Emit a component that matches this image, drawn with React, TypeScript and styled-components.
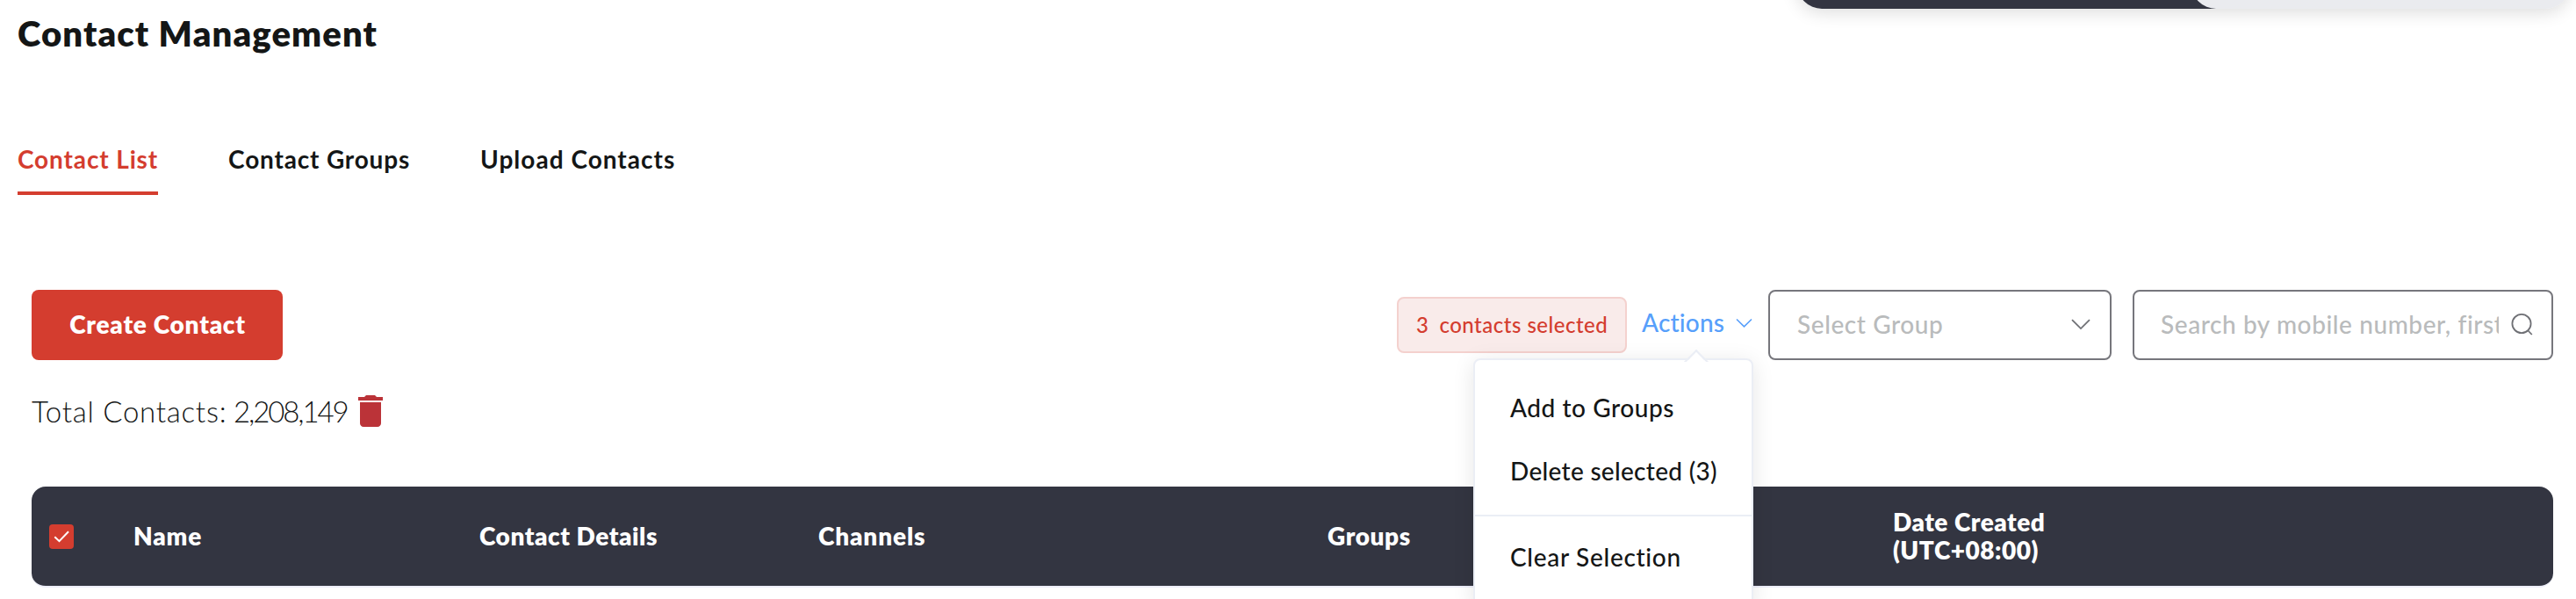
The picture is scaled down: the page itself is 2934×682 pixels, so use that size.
import React from "react";
import styled, { createGlobalStyle } from "styled-components";

const GlobalStyle = createGlobalStyle`
  * { box-sizing: border-box; }
  html, body { margin: 0; background: #fff; overflow: hidden; }
  body { font-family: Lato, "Open Sans", sans-serif; color: #141616; }
  button, input { font: inherit; }
`;

const Page = styled.div`
  position: relative;
  height: 682px;
  overflow: hidden;
  padding: 14px 26px 0 20px;
`;

const FloatingBar = styled.div`
  position: absolute;
  top: -50px;
  left: 2047px;
  width: 880px;
  height: 60px;
  display: flex;
  border-radius: 28px;
  background: linear-gradient(90deg, #333541 60%, #eaebef 60%);
  box-shadow: 0 4px 20px rgba(0, 0, 0, 0.14);
  overflow: hidden;
`;

const FloatingSegment = styled.div`
  margin-left: auto;
  width: 431px;
  border-radius: 28px 0 0 28px;
  background: #eaebef;
`;

const Title = styled.h1`
  margin: 0;
  font-size: 40px;
  font-weight: 800;
  line-height: 48px;
  letter-spacing: 1.12px;
`;

const Tabs = styled.nav`
  display: flex;
  gap: 80px;
  margin-top: 102px;
`;

const Tab = styled.a<{ $active?: boolean; $track: number }>`
  padding-bottom: 20px;
  border-bottom: 4px solid ${(p) => (p.$active ? "#d43d2f" : "transparent")};
  color: ${(p) => (p.$active ? "#d43d2f" : "#141616")};
  font-size: 28px;
  font-weight: 700;
  line-height: 34px;
  letter-spacing: ${(p) => p.$track}px;
`;

const Content = styled.main`
  margin-top: 108px;
  padding-left: 16px;
`;

const Toolbar = styled.div`
  display: flex;
  align-items: center;
  height: 80px;
`;

const CreateButton = styled.button`
  width: 286px;
  height: 80px;
  margin-right: auto;
  padding: 0 0 2px 1px;
  border: 0;
  border-radius: 8px;
  background: #d43d2f;
  color: #fff;
  font-size: 28px;
  font-weight: 800;
  letter-spacing: 0.75px;
`;

const SelectionChip = styled.div`
  display: flex;
  align-items: center;
  gap: 12px;
  width: 262px;
  height: 64px;
  margin-right: 17px;
  padding: 0 0 2px 20px;
  border: 2px solid #f4d1ce;
  border-radius: 8px;
  background: #f9ebea;
  color: #d43d2f;
  font-size: 24px;
  font-weight: 500;
  letter-spacing: 0.5px;
  white-space: nowrap;
`;

const ActionsMenu = styled.div`
  position: relative;
  width: 127px;
  height: 40px;
  margin-right: 17px;
`;

const ActionsTrigger = styled.div`
  display: flex;
  align-items: center;
  justify-content: space-between;
  height: 34px;
  padding-right: 1px;
  color: #579ffb;
  font-size: 28px;
  font-weight: 500;
  letter-spacing: 0.2px;
`;

const Dropdown = styled.div`
  position: absolute;
  top: 58px;
  right: 0;
  z-index: 2;
  width: 319px;
  padding: 18px 0 20px;
  border: 2px solid #ebeef5;
  border-radius: 8px;
  background: #fff;
  box-shadow: 0 4px 24px rgba(0, 0, 0, 0.1);
`;

const DropdownArrow = styled.div`
  position: absolute;
  top: -8px;
  right: 53px;
  width: 20px;
  height: 20px;
  border: 2px solid #ebeef5;
  border-right-color: transparent;
  border-bottom-color: transparent;
  background: linear-gradient(135deg, #fff 50%, transparent 50%);
  transform: rotate(45deg);
`;

const DropdownItem = styled.div<{ $track: number }>`
  padding-left: 40px;
  font-size: 28px;
  font-weight: 500;
  line-height: 72px;
  letter-spacing: ${(p) => p.$track}px;
`;

const Divider = styled.div`
  height: 2px;
  margin: 14px 0 10px;
  background: #ebeef5;
`;

const Field = styled.div<{ $width: number; $padding: string }>`
  display: flex;
  align-items: center;
  justify-content: space-between;
  width: ${(p) => p.$width}px;
  height: 80px;
  padding: ${(p) => p.$padding};
  border: 2px solid #76767c;
  border-radius: 8px;
  background: #fff;
  & + & { margin-left: 24px; }
`;

const Placeholder = styled.span<{ $width?: number }>`
  ${(p) => (p.$width ? `width: ${p.$width}px;` : "")}
  overflow: hidden;
  padding-bottom: 2px;
  white-space: nowrap;
  color: #b9bbbc;
  font-size: 28px;
  font-weight: 500;
  line-height: 36px;
  letter-spacing: 0.58px;
`;

const Summary = styled.div`
  display: flex;
  align-items: center;
  height: 48px;
  margin-top: 34px;
  font-size: 33px;
  font-weight: 300;
`;

const SummaryLabel = styled.span`
  width: 230px;
  letter-spacing: 0.75px;
  white-space: nowrap;
`;

const SummaryCount = styled.span`
  width: 132px;
  letter-spacing: -2.1px;
  white-space: nowrap;
`;

const TrashIcon = styled.svg`
  display: block;
  flex: none;
`;

const TableHeader = styled.div`
  display: grid;
  grid-template-columns: 116px 394px 386px 580px 644px 1fr;
  align-items: center;
  height: 115px;
  margin-top: 62px;
  border-bottom: 2px solid #eeeffa;
  border-radius: 16px;
  background: #333541;
  color: #fff;
`;

const HeaderCell = styled.div<{ $track: number }>`
  padding-bottom: 1px;
  font-size: 28px;
  font-weight: 800;
  line-height: 32px;
  letter-spacing: ${(p) => p.$track}px;
`;

const Checkbox = styled.div`
  width: 28px;
  height: 28px;
  margin-left: 20px;
  border-radius: 4px;
  background: #d43d2f;
`;

const Icon = styled.svg`
  display: block;
  flex: none;
  fill: none;
  stroke: currentColor;
`;

const FieldIcon = styled(Icon)`
  color: #6f7075;
`;

export default function App() {
  return (
    <>
      <GlobalStyle />
      <Page>
        <FloatingBar>
          <FloatingSegment />
        </FloatingBar>
        <Title>Contact Management</Title>
        <Tabs>
          <Tab $active $track={0.87}>Contact List</Tab>
          <Tab $track={0.82}>Contact Groups</Tab>
          <Tab $track={1.02}>Upload Contacts</Tab>
        </Tabs>
        <Content>
          <Toolbar>
            <CreateButton>Create Contact</CreateButton>
            <SelectionChip>
              <span>3</span>
              <span>contacts selected</span>
            </SelectionChip>
            <ActionsMenu>
              <ActionsTrigger>
                Actions
                <Icon width="19" height="12" viewBox="0 0 19 12" strokeWidth="1.6">
                  <path d="M1 2.5l8.5 8.3L18 2.5" />
                </Icon>
              </ActionsTrigger>
              <Dropdown>
                <DropdownArrow />
                <DropdownItem $track={0.55}>Add to Groups</DropdownItem>
                <DropdownItem $track={0.3}>Delete selected (3)</DropdownItem>
                <Divider />
                <DropdownItem $track={0.7}>Clear Selection</DropdownItem>
              </Dropdown>
            </ActionsMenu>
            <Field $width={391} $padding="0 22px 0 31px">
              <Placeholder>Select Group</Placeholder>
              <FieldIcon width="22" height="14" viewBox="0 0 22 14" strokeWidth="1.8">
                <path d="M1 1.2l10 9.9 10-9.9" />
              </FieldIcon>
            </Field>
            <Field $width={479} $padding="0 21px 0 30px">
              <Placeholder $width={385}>Search by mobile number, first name</Placeholder>
              <FieldIcon width="26" height="26" viewBox="0 0 26 26" strokeWidth="1.8">
                <circle cx="13" cy="11.5" r="10.6" />
                <path d="M20 19l4.8 5" />
              </FieldIcon>
            </Field>
          </Toolbar>
          <Summary>
            <SummaryLabel>Total Contacts:</SummaryLabel>
            <SummaryCount>2,208,149</SummaryCount>
            <TrashIcon width="48" height="48" viewBox="0 0 24 24" fill="#bb3338">
              <path d="M6 19c0 1.1.9 2 2 2h8c1.1 0 2-.9 2-2V7H6v12zM19 4h-3.5l-1-1h-5l-1 1H5v2h14V4z" />
            </TrashIcon>
          </Summary>
          <TableHeader>
            <Checkbox>
              <Icon width="28" height="28" viewBox="0 0 28 28" strokeWidth="2">
                <path d="M6.3 14.2l5.2 5L22 8.3" />
              </Icon>
            </Checkbox>
            <HeaderCell $track={0.8}>Name</HeaderCell>
            <HeaderCell $track={0.55}>Contact Details</HeaderCell>
            <HeaderCell $track={0.85}>Channels</HeaderCell>
            <HeaderCell $track={0.6}>Groups</HeaderCell>
            <HeaderCell $track={0.5}>
              Date Created
              <br />
              (UTC+08:00)
            </HeaderCell>
          </TableHeader>
        </Content>
      </Page>
    </>
  );
}
